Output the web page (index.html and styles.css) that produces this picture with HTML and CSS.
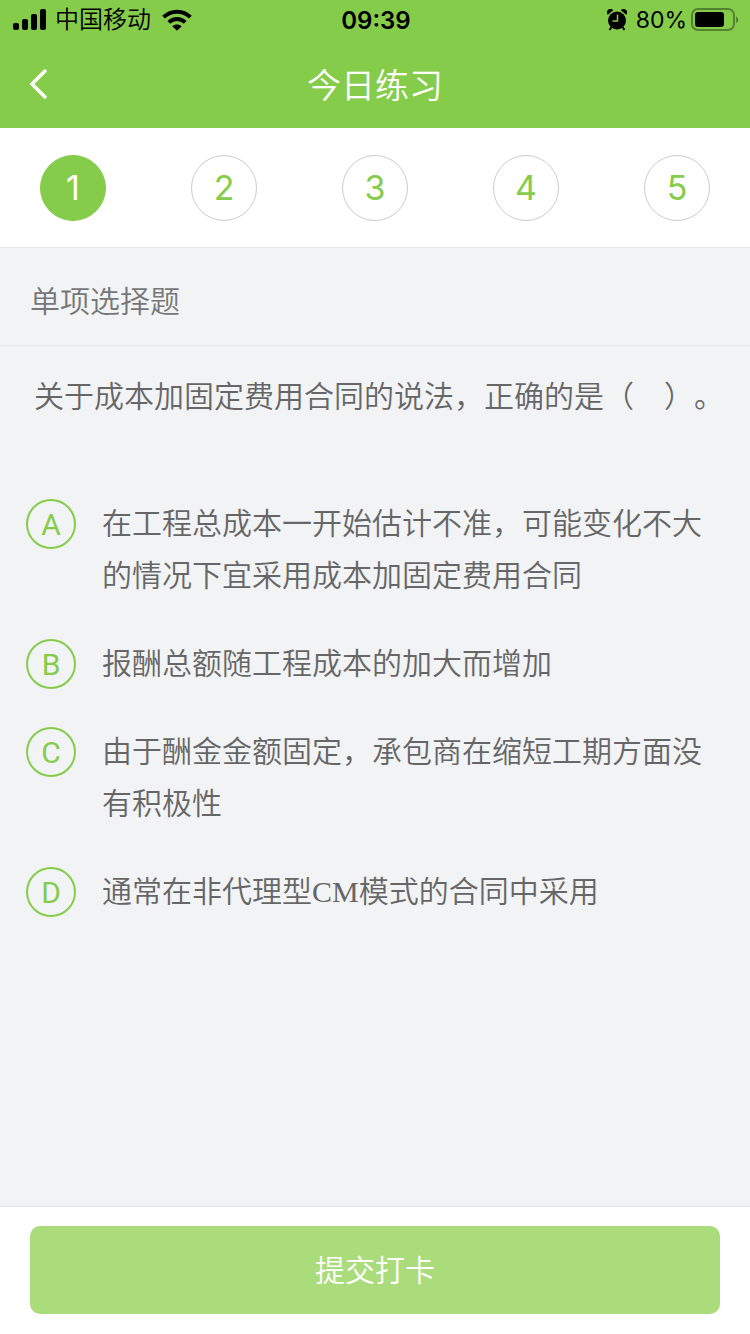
FILE: index.html
```html
<!DOCTYPE html>
<html lang="zh-CN">
<head>
  <meta charset="UTF-8" />
  <meta name="viewport" content="width=device-width, initial-scale=1.0"/>
  <title>今日练习</title>
  <link rel="stylesheet" href="styles.css">
</head>
<body>
  <header class="header">
    <div class="status-bar">
      <div class="status-left">
        <svg class="signal" width="34" height="22" viewBox="0 0 34 22">
          <rect x="0" y="14" width="6" height="7" rx="2"/>
          <rect x="9" y="10" width="6" height="11" rx="2"/>
          <rect x="18" y="5" width="6" height="16" rx="2"/>
          <rect x="27" y="0" width="6" height="21" rx="2"/>
        </svg>
        <span class="carrier">中国移动</span>
        <svg class="wifi" width="30" height="22" viewBox="0 0 30 22">
          <path d="M1.6 8.2C9 .9 21 .9 28.4 8.2" fill="none" stroke="#000" stroke-width="4"/>
          <path d="M6.8 13.4C11.4 9 18.6 9 23.2 13.4" fill="none" stroke="#000" stroke-width="4"/>
          <path d="M10.3 17.2C13 14.9 17 14.9 19.7 17.2L15 21.8Z"/>
        </svg>
      </div>
      <span class="time">09:39</span>
      <div class="status-right">
        <svg width="20" height="22" viewBox="0 0 20 22">
          <circle cx="10" cy="11.5" r="9"/>
          <path d="M.8 5.8A3.4 3.4 0 0 1 6.2 1.2ZM19.2 5.8A3.4 3.4 0 0 0 13.8 1.2Z"/>
          <path d="M4.5 18l-2 3M15.5 18l2 3" stroke="#000" stroke-width="2"/>
          <path d="M10.5 5.5v6.5h-5" fill="none" stroke="#86cc4b" stroke-width="1.5"/>
        </svg>
        <span class="percent">80%</span>
        <svg width="48" height="24" viewBox="0 0 48 24">
          <rect x="1" y="1" width="42" height="21" rx="6" fill="none" stroke="#548330" stroke-width="2"/>
          <rect x="4" y="4" width="29" height="15" rx="3"/>
          <path d="M45 8.5C48 9.5 48 14 45 15Z" fill="#548330"/>
        </svg>
      </div>
    </div>
    <nav class="nav">
      <button class="back" type="button" aria-label="返回">
        <svg width="20" height="32" viewBox="0 0 20 32">
          <path d="M17 3L4 16l13 13" fill="none" stroke="#fff" stroke-width="3.5" stroke-linecap="round"/>
        </svg>
      </button>
      <h1>今日练习</h1>
    </nav>
  </header>

  <div class="steps">
    <button class="step active" type="button">1</button>
    <button class="step" type="button">2</button>
    <button class="step" type="button">3</button>
    <button class="step" type="button">4</button>
    <button class="step" type="button">5</button>
  </div>

  <form class="quiz">
    <h2>单项选择题</h2>
    <div class="content">
      <p class="question">关于成本加固定费用合同的说法，正确的是（　）。</p>
      <div class="options">
        <label class="option">
          <input type="radio" name="answer" value="A">
          <span class="letter">A</span>
          <span class="text">在工程总成本一开始估计不准，可能变化不大的情况下宜采用成本加固定费用合同</span>
        </label>
        <label class="option">
          <input type="radio" name="answer" value="B">
          <span class="letter">B</span>
          <span class="text">报酬总额随工程成本的加大而增加</span>
        </label>
        <label class="option">
          <input type="radio" name="answer" value="C">
          <span class="letter">C</span>
          <span class="text">由于酬金金额固定，承包商在缩短工期方面没有积极性</span>
        </label>
        <label class="option">
          <input type="radio" name="answer" value="D">
          <span class="letter">D</span>
          <span class="text">通常在非代理型CM模式的合同中采用</span>
        </label>
      </div>
    </div>
    <div class="footer">
      <button class="submit" type="submit">提交打卡</button>
    </div>
  </form>
</body>
</html>
```
FILE: styles.css
```css
* {
  box-sizing: border-box;
}
body {
  font-family: "Noto Sans CJK SC", sans-serif;
  font-weight: 350;
  margin: 0;
  min-height: 100vh;
  display: flex;
  flex-direction: column;
  background: #f2f3f5;
  color: #666;
}
button {
  font-family: inherit;
  font-weight: inherit;
  padding: 0;
  border: none;
  cursor: pointer;
}
svg {
  display: block;
}

/* header */
.header {
  background: #86cc4b;
}
.status-bar {
  display: grid;
  grid-template-columns: 1fr auto 1fr;
  align-items: center;
  height: 40px;
  padding: 0 11px 0 13px;
  color: #000;
  font-family: Inter, "Noto Sans CJK SC", sans-serif;
  font-size: 24px;
}
.status-left,
.status-right {
  display: flex;
  align-items: center;
}
.status-left {
  gap: 8px;
}
.status-right {
  justify-content: flex-end;
}
.carrier {
  line-height: 40px;
}
.wifi {
  margin-left: 3px;
}
.time {
  font-weight: 600;
}
.percent {
  margin: 0 4px 0 9px;
  font-size: 23px;
  font-weight: 400;
}
.nav {
  display: grid;
  grid-template-columns: 60px 1fr 60px;
  align-items: center;
  height: 88px;
  padding: 0 28px;
}
.back {
  background: none;
}
.nav h1 {
  margin: 0;
  padding-bottom: 2px;
  color: #fff;
  font-size: 34px;
  font-weight: inherit;
  text-align: center;
}

/* question numbers */
.steps {
  display: flex;
  justify-content: space-between;
  padding: 27px 40px 26px;
  background: #fff;
  border-bottom: 1px solid #e5e5e5;
}
.step {
  width: 66px;
  height: 66px;
  border: 1px solid #ccc;
  border-radius: 50%;
  background: #fff;
  color: #86cc4b;
  font-family: Inter, sans-serif;
  font-size: 34px;
  font-weight: 400;
  line-height: 64px;
}
.step.active {
  border-color: #86cc4b;
  background: #86cc4b;
  color: #fff;
}

/* question */
.quiz {
  flex: 1;
  display: flex;
  flex-direction: column;
}
.quiz h2 {
  margin: 0;
  padding: 6px 30px 0;
  border-bottom: 1px solid #e9eaec;
  color: #777;
  font-size: 30px;
  font-weight: inherit;
  line-height: 91px;
}
.content {
  flex: 1;
  padding: 25px 26px;
}
.question,
.text {
  font-family: "Liberation Serif", "Noto Sans CJK SC", serif;
  font-size: 30px;
  line-height: 52px;
}
.question {
  margin: 0 -6px 75px 8px;
  text-spacing-trim: space-all;
}
.options {
  display: flex;
  flex-direction: column;
  gap: 36px;
}
.option {
  position: relative;
  display: flex;
  align-items: flex-start;
  gap: 26px;
  cursor: pointer;
}
.option input {
  position: absolute;
  opacity: 0;
}
.letter {
  flex: none;
  width: 50px;
  height: 50px;
  margin-top: 1px;
  border: 2px solid #86cc4b;
  border-radius: 50%;
  color: #86cc4b;
  font-family: Roboto, sans-serif;
  font-size: 30px;
  font-weight: 400;
  line-height: 48px;
  text-align: center;
}
.option input:checked + .letter {
  background: #86cc4b;
  color: #fff;
}

/* submit */
.footer {
  padding: 19px 30px 20px;
  background: #fff;
  border-top: 1px solid #e5e5e5;
}
.submit {
  display: block;
  width: 100%;
  height: 88px;
  padding-bottom: 4px;
  border-radius: 10px;
  background: #aadc7b;
  color: #fff;
  font-size: 30px;
}
```
